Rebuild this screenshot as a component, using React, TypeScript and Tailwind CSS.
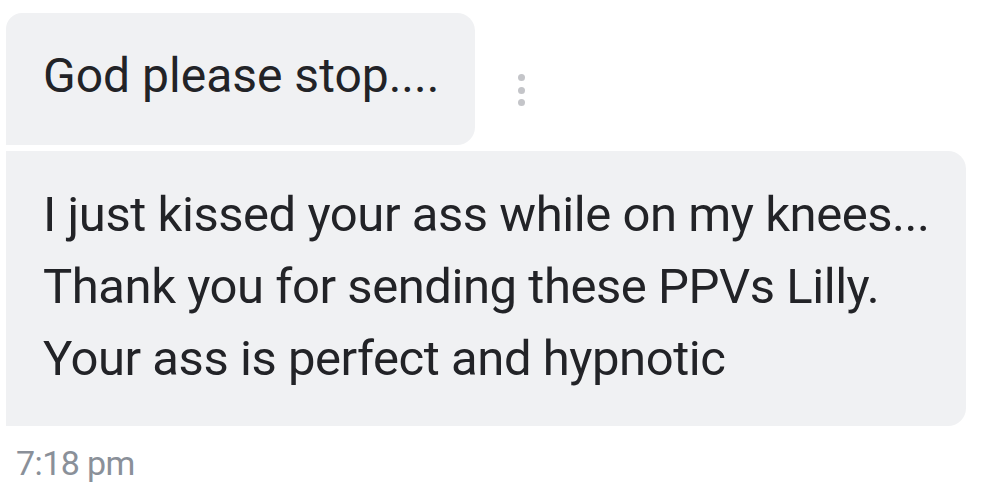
export default function App() {
  return (
    <div className="w-[995px] h-[491px] bg-white overflow-hidden pl-[6px] pt-[13px] font-['Roboto',sans-serif]">
      <div className="flex items-start">
        <div className="bg-[#f0f1f3] rounded-tl-[16px] rounded-tr-[18px] rounded-br-[18px] rounded-bl-none h-[132px] w-[469px] pl-[37px] flex items-center">
          <span className="text-[48px] leading-none text-[#222327] pb-[6px]">God please stop....</span>
        </div>
        <div className="flex flex-col gap-[5.5px] ml-[43px] mt-[61px]">
          <span className="w-[7px] h-[7px] rounded-full bg-[#c4c5c9]" />
          <span className="w-[7px] h-[7px] rounded-full bg-[#c4c5c9]" />
          <span className="w-[7px] h-[7px] rounded-full bg-[#c4c5c9]" />
        </div>
      </div>

      <div className="mt-[6px] bg-[#f0f1f3] w-[960px] h-[275px] rounded-tr-[18px] rounded-br-[18px] pl-[37px] pt-[28px]">
        <p className="text-[49px] leading-[72px] tracking-[-0.45px] text-[#222327]">
          I just kissed your ass while on my knees...
          <br />
          Thank you for sending these PPVs Lilly.
          <br />
          Your ass is perfect and hypnotic
        </p>
      </div>

      <div className="ml-[10px] mt-[20px] text-[34px] leading-none tracking-[-0.6px] text-[#8a9099]">7:18 pm</div>
    </div>
  );
}
